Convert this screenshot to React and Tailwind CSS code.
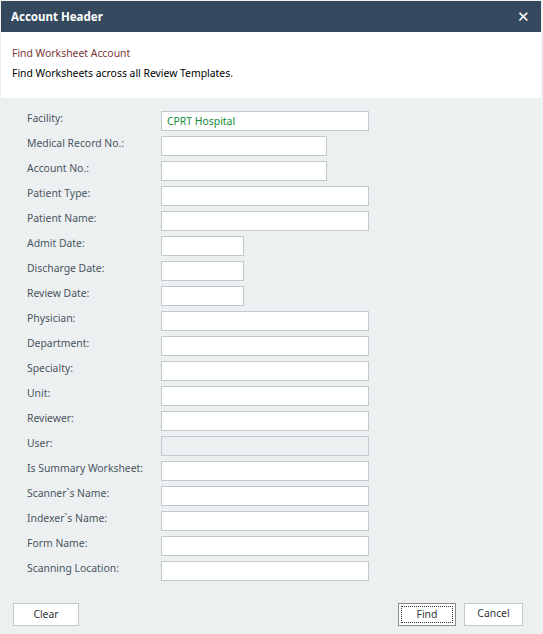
import React, { useState } from "react";

// Fields shown in the find form: label + input width
const fields = [
  { label: "Facility:", w: "w-[208px]", value: "CPRT Hospital" },
  { label: "Medical Record No.:", w: "w-[166px]" },
  { label: "Account No.:", w: "w-[166px]" },
  { label: "Patient Type:", w: "w-[208px]" },
  { label: "Patient Name:", w: "w-[208px]" },
  { label: "Admit Date:", w: "w-[83px]" },
  { label: "Discharge Date:", w: "w-[83px]" },
  { label: "Review Date:", w: "w-[83px]" },
  { label: "Physician:", w: "w-[208px]" },
  { label: "Department:", w: "w-[208px]" },
  { label: "Specialty:", w: "w-[208px]" },
  { label: "Unit:", w: "w-[208px]" },
  { label: "Reviewer:", w: "w-[208px]" },
  { label: "User:", w: "w-[208px]", disabled: true },
  { label: "Is Summary Worksheet:", w: "w-[208px]" },
  { label: "Scanner`s Name:", w: "w-[208px]" },
  { label: "Indexer`s Name:", w: "w-[208px]" },
  { label: "Form Name:", w: "w-[208px]" },
  { label: "Scanning Location:", w: "w-[208px]" },
];

const App = () => {
  const [form, setForm] = useState(
    Object.fromEntries(fields.map((f) => [f.label, f.value || ""]))
  );

  return (
    <div
      className="w-[543px] h-[634px] bg-[#f0f0f0] pt-[1px] pl-[1px] overflow-hidden"
      style={{ fontFamily: '"Noto Sans", "Open Sans", sans-serif' }}
    >
      <div className="w-[540px] h-[630px] flex flex-col bg-[#ecf0f1]">
        {/* Title bar */}
        <div className="h-[31px] bg-[#34495e] flex items-center justify-between pl-[10px] pr-[11px] shrink-0">
          <span className="text-white font-bold text-[11.5px]">Account Header</span>
          <span className="text-white text-[15px] leading-none">✕</span>
        </div>

        {/* Header description */}
        <div className="bg-white h-[66px] pl-[11px] pt-[11px] shrink-0">
          <div className="text-[10.4px] text-[#7a3535] leading-[20px]">Find Worksheet Account</div>
          <div className="text-[10.4px] text-black leading-[20px]">Find Worksheets across all Review Templates.</div>
        </div>

        {/* Form rows */}
        <div className="flex flex-col gap-[5px] pt-[13px] pl-[26px]">
          {fields.map((f) => (
            <div key={f.label} className="flex h-[20px]">
              <label className="w-[134px] text-[10.4px] text-[#4a5560] leading-[15px]">{f.label}</label>
              <input
                value={form[f.label]}
                disabled={f.disabled}
                onChange={(e) => setForm({ ...form, [f.label]: e.target.value })}
                className={`${f.w} h-[20px] border border-[#bfcacc] px-[5px] text-[10.4px] text-[#138a36] outline-none ${
                  f.disabled ? "bg-[#ecf0f1]" : "bg-white"
                }`}
              />
            </div>
          ))}
        </div>

        {/* Footer buttons */}
        <div className="flex items-center justify-between pl-[12px] pr-[18px] mt-[22px]">
          <button className="w-[66px] h-[23px] bg-white border border-[#bfcacc] text-[10.4px] text-[#333]">
            Clear
          </button>
          <div className="flex gap-[8px] -mt-[1px]">
            <button className="w-[58px] h-[23px] bg-white border border-[#8a8a8a] p-[2px] text-[10.4px] text-[#333]">
              <span className="block w-full h-full border border-dotted border-[#333] leading-[15px]">Find</span>
            </button>
            <button className="w-[59px] h-[23px] bg-white border border-[#bfcacc] text-[10.4px] text-[#333]">
              Cancel
            </button>
          </div>
        </div>
      </div>
    </div>
  );
};

export default App;
